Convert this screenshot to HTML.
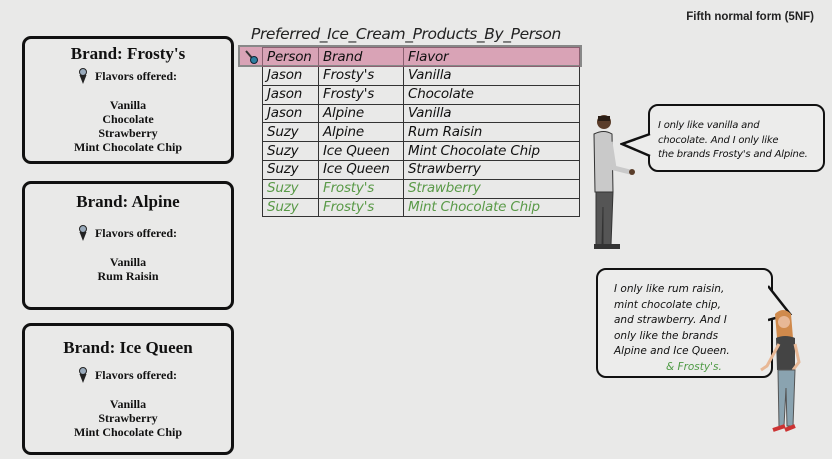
<!DOCTYPE html>
<html><head><style>
body{margin:0;width:832px;height:459px;background:#e9e9e8;position:relative;overflow:hidden;font-family:"Liberation Serif",serif;color:#111}
.box{position:absolute;left:22px;width:206px;border:3px solid #111;border-radius:9px;text-align:center}
.box h2{margin:0;font-size:17px;font-weight:bold}
.fo{font-size:12px;font-weight:bold;margin-top:4px}
.fl{font-size:12px;font-weight:bold;line-height:14px;margin-top:14px}
.cone{display:inline-block;width:8px;height:16px;vertical-align:-4px;margin-right:8px}
table{position:absolute;left:262px;top:47px;border-collapse:collapse;font-size:13.5px}
td{border:1px solid #333;height:17.8px;padding:0 4px;line-height:17px;font-family:"DejaVu Sans",sans-serif;font-style:italic;font-weight:300;letter-spacing:-0.2px}
.g td{color:#5a9a48}
.bub{position:absolute;border:2.5px solid #111;border-radius:10px;background:#ececeb;font-family:"DejaVu Sans",sans-serif;font-style:italic;font-size:11px;line-height:15.5px;white-space:nowrap}
</style></head><body>
<div style="position:absolute;right:18px;top:11px;font-family:'Liberation Sans',sans-serif;font-size:11.5px;font-weight:bold;color:#222">Fifth normal form (5NF)</div>

<div class="box" style="top:36px;height:122px"><h2 style="margin-top:5px">Brand: Frosty's</h2>
<div class="fo"><svg class="cone" viewBox="0 0 8 16"><circle cx="4" cy="4" r="3.5" fill="#9ab" stroke="#222"/><path d="M0.5 7L4 16L7.5 7Z" fill="#222"/></svg>Flavors offered:</div>
<div class="fl">Vanilla<br>Chocolate<br>Strawberry<br>Mint Chocolate Chip</div></div>

<div class="box" style="top:181px;height:123px"><h2 style="margin-top:8px">Brand: Alpine</h2>
<div class="fo" style="margin-top:13px"><svg class="cone" viewBox="0 0 8 16"><circle cx="4" cy="4" r="3.5" fill="#9ab" stroke="#222"/><path d="M0.5 7L4 16L7.5 7Z" fill="#222"/></svg>Flavors offered:</div>
<div class="fl">Vanilla<br>Rum Raisin</div></div>

<div class="box" style="top:323px;height:126px"><h2 style="margin-top:12px">Brand: Ice Queen</h2>
<div class="fo" style="margin-top:9px"><svg class="cone" viewBox="0 0 8 16"><circle cx="4" cy="4" r="3.5" fill="#9ab" stroke="#222"/><path d="M0.5 7L4 16L7.5 7Z" fill="#222"/></svg>Flavors offered:</div>
<div class="fl">Vanilla<br>Strawberry<br>Mint Chocolate Chip</div></div>

<div style="position:absolute;left:251px;top:25px;font-family:'DejaVu Sans',sans-serif;font-style:italic;font-size:15.5px;letter-spacing:-0.4px;font-weight:300;color:#222">Preferred_Ice_Cream_Products_By_Person</div>
<div style="position:absolute;left:238px;top:45px;width:344px;height:22px;background:#d9a3b6;border:2px solid #888;box-sizing:border-box"></div>
<svg style="position:absolute;left:244px;top:49px" width="16" height="16"><line x1="2" y1="2" x2="8" y2="9" stroke="#333" stroke-width="2"/><circle cx="10" cy="11" r="3.5" fill="#2d7fa0" stroke="#123" stroke-width="1"/></svg>
<table>
<tr style="height:19px"><td style="width:47px;border-color:#8a6070">Person</td><td style="width:76px;border-color:#8a6070">Brand</td><td style="width:167px;border-color:#8a6070">Flavor</td></tr>
<tr><td>Jason</td><td>Frosty's</td><td>Vanilla</td></tr>
<tr><td>Jason</td><td>Frosty's</td><td>Chocolate</td></tr>
<tr><td>Jason</td><td>Alpine</td><td>Vanilla</td></tr>
<tr><td>Suzy</td><td>Alpine</td><td>Rum Raisin</td></tr>
<tr><td>Suzy</td><td>Ice Queen</td><td>Mint Chocolate Chip</td></tr>
<tr><td>Suzy</td><td>Ice Queen</td><td>Strawberry</td></tr>
<tr class="g"><td>Suzy</td><td>Frosty's</td><td>Strawberry</td></tr>
<tr class="g"><td>Suzy</td><td>Frosty's</td><td>Mint Chocolate Chip</td></tr>
</table>

<div class="bub" style="left:648px;top:104px;width:177px;height:68px;padding:13px 0 0 8px;box-sizing:border-box;font-size:10px;letter-spacing:-0.2px;line-height:14.5px">I only like vanilla and<br>chocolate. And I only like<br>the brands Frosty's and Alpine.</div>
<svg style="position:absolute;left:620px;top:130px" width="32" height="30"><path d="M30 4 L2 14 L30 26" fill="#ececeb" stroke="#111" stroke-width="2.5"/></svg>

<div class="bub" style="left:596px;top:268px;width:177px;height:110px;padding:12px 0 0 16px;box-sizing:border-box;font-size:10.5px">I only like rum raisin,<br>mint chocolate chip,<br>and strawberry. And I<br>only like the brands<br>Alpine and Ice Queen.<br><span style="color:#4e9a44;padding-left:52px">&amp; Frosty's.</span></div>
<svg style="position:absolute;left:768px;top:284px" width="26" height="40"><path d="M0 2 L22 30 L0 36" fill="#ececeb" stroke="#111" stroke-width="2.5"/></svg>

<svg style="position:absolute;left:588px;top:112px" width="50" height="142">
<circle cx="16" cy="10" r="7" fill="#5a3d2a"/><rect x="10" y="4" width="12" height="5" fill="#2a1d14"/>
<path d="M6 22 Q16 17 24 22 L25 80 L7 80 Z" fill="#c9c9c9" stroke="#333"/>
<path d="M22 30 L26 56 L42 60" fill="none" stroke="#c9c9c9" stroke-width="5"/><circle cx="44" cy="60" r="3" fill="#5a3d2a"/>
<path d="M8 80 L25 80 L23 133 L15 133 L15 95 L14 133 L8 133 Z" fill="#555" stroke="#333"/>
<rect x="6" y="132" width="26" height="5" fill="#333"/>
</svg>
<svg style="position:absolute;left:755px;top:308px" width="55" height="132">
<path d="M20 6 Q28 -2 36 6 L38 30 L22 30 Z" fill="#d08a4c"/><circle cx="29" cy="14" r="6" fill="#e8b896"/>
<path d="M21 30 Q30 26 40 30 L40 62 L22 62 Z" fill="#444"/>
<path d="M24 36 L12 58 L6 62" fill="none" stroke="#e8b896" stroke-width="3"/>
<path d="M40 36 L44 54 L38 62" fill="none" stroke="#e8b896" stroke-width="3"/>
<path d="M23 62 L40 62 L38 118 L32 118 L31 80 L29 118 L24 118 Z" fill="#8aa3b0" stroke="#555"/>
<path d="M18 122 L30 118 M30 122 L40 118" stroke="#c33" stroke-width="4"/>
</svg>
</body></html>
